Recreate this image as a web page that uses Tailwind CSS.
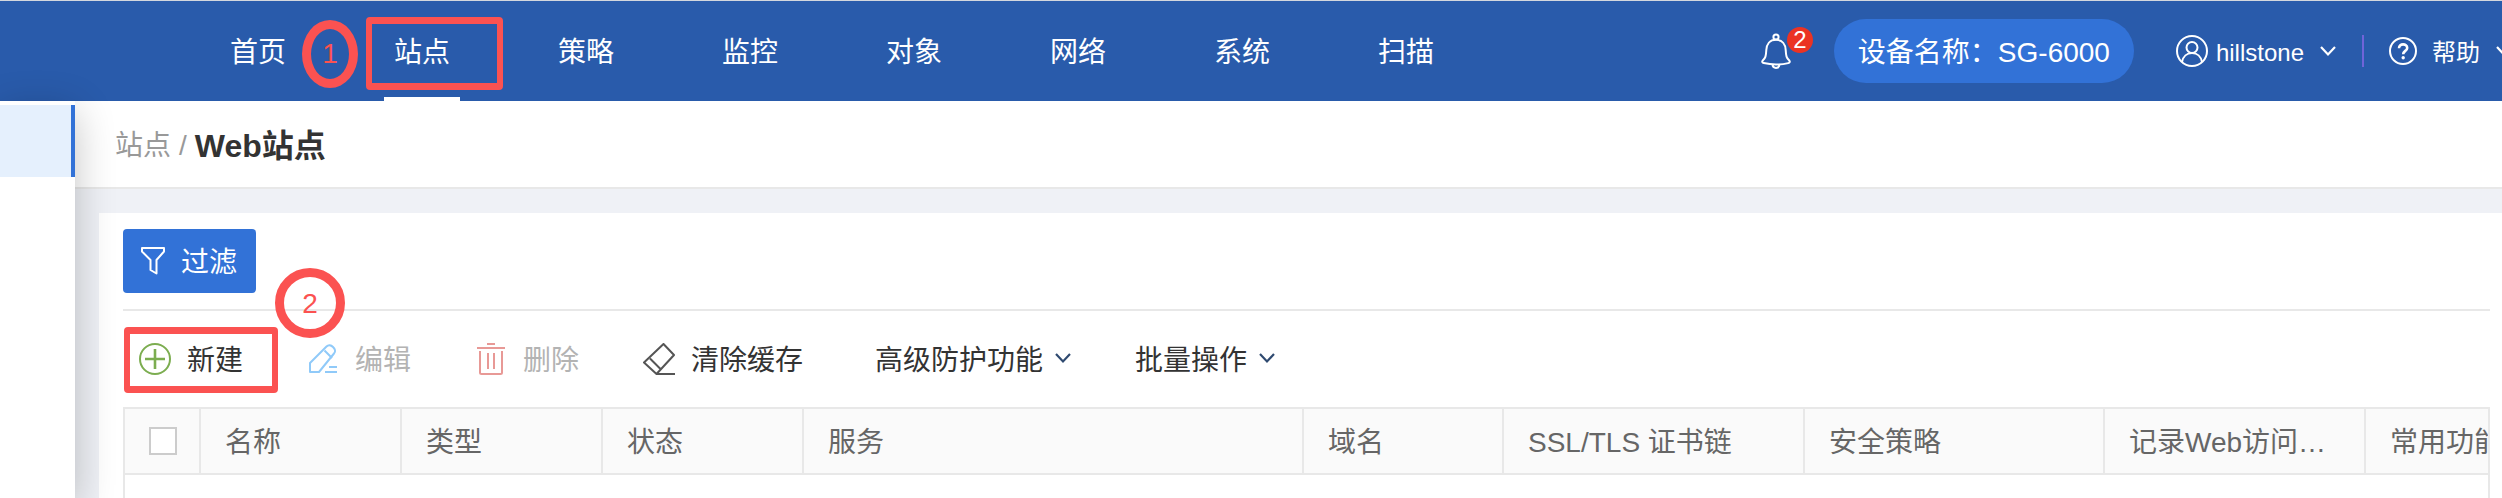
<!DOCTYPE html>
<html lang="zh-CN">
<head>
    <meta charset="UTF-8">
    <meta name="viewport" content="width=device-width, initial-scale=1.0">
    <title>Web站点</title>
    <script src="https://cdn.jsdelivr.net/npm/@tailwindcss/browser@4"></script>
</head>
<body class="flex min-h-screen flex-col overflow-x-hidden bg-[#eff1f6] font-['Liberation_Sans','Noto_Sans_CJK_SC',sans-serif] text-[28px] leading-10 text-[#333]">
    <!-- Top bar -->
    <header class="flex h-[101px] items-stretch justify-between overflow-hidden border-t border-[#d3d7de] bg-[#295bab] text-white">
        <nav class="flex gap-[88px] pl-[220px] whitespace-nowrap">
            <a href="#" class="relative flex items-center px-2.5 pt-1">首页
                <span class="absolute top-[19px] left-[82px] flex h-[68px] w-14 items-center justify-center rounded-[50%] border-9 border-[#fb5251] text-[#fb5251]">1</span>
            </a>
            <a href="#" class="relative flex items-center border-b-4 border-white px-2.5 pt-2">站点
                <span class="absolute top-4 -left-[18px] h-[73px] w-[137px] rounded-sm border-x-6 border-y-7 border-[#fb5251]"></span>
            </a>
            <a href="#" class="flex items-center px-2.5 pt-1">策略</a>
            <a href="#" class="flex items-center px-2.5 pt-1">监控</a>
            <a href="#" class="flex items-center px-2.5 pt-1">对象</a>
            <a href="#" class="flex items-center px-2.5 pt-1">网络</a>
            <a href="#" class="flex items-center px-2.5 pt-1">系统</a>
            <a href="#" class="flex items-center px-2.5 pt-1">扫描</a>
        </nav>

        <div class="-mr-2.5 flex items-center whitespace-nowrap text-2xl">
            <button type="button" aria-label="通知" class="relative mr-[43px]">
                <svg class="h-9 w-[30px]" viewBox="0 0 30 36" fill="none" stroke="currentColor" stroke-width="2">
                    <circle cx="15" cy="4" r="2.6"/>
                    <path d="M15 6.800C8.500 6.800 5.600 11.500 5.300 17c-.3 6-.8 8-3.600 10.600-.9 1-.4 2.200 1 2.500C10 31.800 20 31.800 27.300 30.100c1.400-.3 1.900-1.500 1-2.500C25.500 25 25 23 24.700 17 24.400 11.500 21.500 6.800 15 6.800z"/>
                    <path d="M11.500 31.500c.3 4.500 6.700 4.500 7 0"/>
                </svg>
                <span class="absolute -top-1.5 left-[26px] flex size-[26px] items-center justify-center rounded-full bg-[#eb3323] text-2xl">2</span>
            </button>
            <div class="mr-[42px] flex h-16 items-center rounded-full bg-[#3272d7] px-6 pt-1 text-[28px]">设备名称：SG-6000</div>
            <button type="button" class="flex items-center">
                <svg class="mr-2 size-8" viewBox="0 0 32 32" fill="none" stroke="currentColor" stroke-width="2">
                    <circle cx="16" cy="16" r="15"/>
                    <circle cx="16" cy="12.500" r="5.500"/>
                    <path d="M6 27c1-5.500 5-9 10-9s9 3.500 10 9"/>
                </svg>
                <span class="pt-1">hillstone</span>
                <svg class="ml-4 size-4" viewBox="0 0 16 16" fill="none" stroke="currentColor" stroke-width="2.200"><path d="M1 4l7 7.500L15 4"/></svg>
            </button>
            <span class="mr-[25px] ml-[26px] h-8 w-0.5 bg-[#7064d8]"></span>
            <button type="button" class="flex items-center">
                <svg class="mr-[15px] size-7" viewBox="0 0 28 28" fill="none" stroke="currentColor" stroke-width="2">
                    <circle cx="14" cy="14" r="13"/>
                    <path d="M10 11.200c0-5.200 8.200-5 8.200-.3 0 3-4 3-4 6.300" stroke-width="2.600"/>
                    <circle cx="14.200" cy="20.800" r="1.700" fill="currentColor" stroke="none"/>
                </svg>
                <span class="pt-1">帮助</span>
                <svg class="ml-4 size-4" viewBox="0 0 16 16" fill="none" stroke="currentColor" stroke-width="2.200"><path d="M1 4l7 7.500L15 4"/></svg>
            </button>
        </div>
    </header>

    <div class="flex flex-1">
        <!-- Side menu -->
        <aside class="z-10 w-[75px] shrink-0 bg-white pt-1 shadow-[0_10px_40px_rgba(0,0,0,0.24)]">
            <a href="#" aria-label="Web站点" class="block h-[72px] border-r-4 border-[#3272d7] bg-[#e5f0fd]"></a>
        </aside>

        <main class="flex min-w-0 flex-1 flex-col">
            <div class="flex h-[88px] items-center border-b-2 border-[#e8e8e8] bg-white pt-1 pl-10">
                <a href="#" class="text-[#999]">站点</a>
                <span class="mx-2 text-[#999]">/</span>
                <h1 class="text-[32px] font-bold">Web站点</h1>
            </div>

            <section class="mt-6 ml-6 flex flex-1 flex-col bg-white pt-4 pr-3 pl-6">
                <button type="button" class="flex h-16 w-[133px] items-center gap-4 rounded-sm bg-[#3272d7] pl-[18px] text-white">
                    <svg class="h-7 w-6" viewBox="0 0 24 28" fill="none" stroke="currentColor" stroke-width="2" stroke-linejoin="round">
                        <path d="M1 1h22v3.500l-7.500 8.500v13.500l-6-3.500V13L1 4.500z"/>
                    </svg>
                    <span class="pt-1">过滤</span>
                </button>

                <!-- Toolbar -->
                <div class="mt-4 flex h-[98px] items-center gap-16 border-t-2 border-[#e8e8e8] pl-4 whitespace-nowrap">
                    <button type="button" class="relative flex items-center gap-4">
                        <svg class="size-8" viewBox="0 0 32 32" fill="none" stroke="#7cad50" stroke-width="2">
                            <circle cx="16" cy="16" r="15"/>
                            <path d="M16 6v20M6 16h20" stroke-width="2.600"/>
                        </svg>
                        <span class="pt-1">新建</span>
                        <span class="absolute -top-2.5 -left-[15px] h-[66px] w-[154px] rounded-sm border-x-6 border-y-7 border-[#fb5251]"></span>
                        <span class="absolute -top-[69px] left-[136px] flex size-[70px] items-center justify-center rounded-full border-9 border-[#fb5251] pt-0.5 text-[#fb5251]">2</span>
                    </button>
                    <button type="button" disabled class="flex items-center gap-4 text-[#b3b3b3]">
                        <svg class="size-8" viewBox="0 0 32 32" fill="none" stroke="#90caf9" stroke-width="2" stroke-linejoin="round">
                            <path d="M3 29v-9L19.500 3.500c2-2 4.500-1.500 6.500.5s3 4.500 1 6.500L12 29z"/>
                            <path d="M17.500 7.500l7.500 7.500M22 24h8M18 29h12"/>
                        </svg>
                        <span class="pt-1">编辑</span>
                    </button>
                    <button type="button" disabled class="flex items-center gap-4 text-[#b3b3b3]">
                        <svg class="size-8" viewBox="0 0 32 32" fill="none" stroke="#e89996" stroke-width="2">
                            <path d="M12 1h8M2 5h28"/>
                            <path d="M5 8v21.500c0 .8.700 1.500 1.500 1.500h19c.8 0 1.500-.7 1.500-1.500V8M13 10v16M19 10v16"/>
                        </svg>
                        <span class="pt-1">删除</span>
                    </button>
                    <button type="button" class="flex items-center gap-4">
                        <svg class="size-8" viewBox="0 0 32 32" fill="none" stroke="#555" stroke-width="2" stroke-linejoin="round">
                            <path d="M20.500 1L31 12 13.500 31 1 19.500zM7 15.500L18 26.500M13 31h19"/>
                        </svg>
                        <span class="pt-1">清除缓存</span>
                    </button>
                    <button type="button" class="ml-2 flex items-center gap-3">
                        <span class="pt-1">高级防护功能</span>
                        <svg class="size-4" viewBox="0 0 16 16" fill="none" stroke="#2f4a70" stroke-width="2.200"><path d="M1 3l7 7.500L15 3"/></svg>
                    </button>
                    <button type="button" class="flex items-center gap-3">
                        <span class="pt-1">批量操作</span>
                        <svg class="size-4" viewBox="0 0 16 16" fill="none" stroke="#2f4a70" stroke-width="2.200"><path d="M1 3l7 7.500L15 3"/></svg>
                    </button>
                </div>

                <!-- Site list -->
                <div class="flex-1 overflow-hidden border-2 border-b-0 border-[#e8e8e8]">
                    <table class="w-[2640px] table-fixed border-separate border-spacing-0 text-left whitespace-nowrap text-[#666]">
                        <thead>
                            <tr class="h-[66px] bg-[#fafafa] *:border-r-2 *:border-b-2 *:border-[#e8e8e8] *:px-6 *:py-0 *:font-normal [&>th+th]:pt-1">
                                <th class="w-[76px]"><input type="checkbox" aria-label="全选" class="block size-7 appearance-none border-2 border-[#ccc] bg-white"></th>
                                <th class="w-[201px]">名称</th>
                                <th class="w-[201px]">类型</th>
                                <th class="w-[201px]">状态</th>
                                <th class="w-[500px]">服务</th>
                                <th class="w-[200px]">域名</th>
                                <th class="w-[301px]">SSL/TLS 证书链</th>
                                <th class="w-[300px]">安全策略</th>
                                <th class="w-[261px]">记录Web访问…</th>
                                <th>常用功能</th>
                            </tr>
                        </thead>
                    </table>
                </div>
            </section>
        </main>
    </div>
</body>
</html>
